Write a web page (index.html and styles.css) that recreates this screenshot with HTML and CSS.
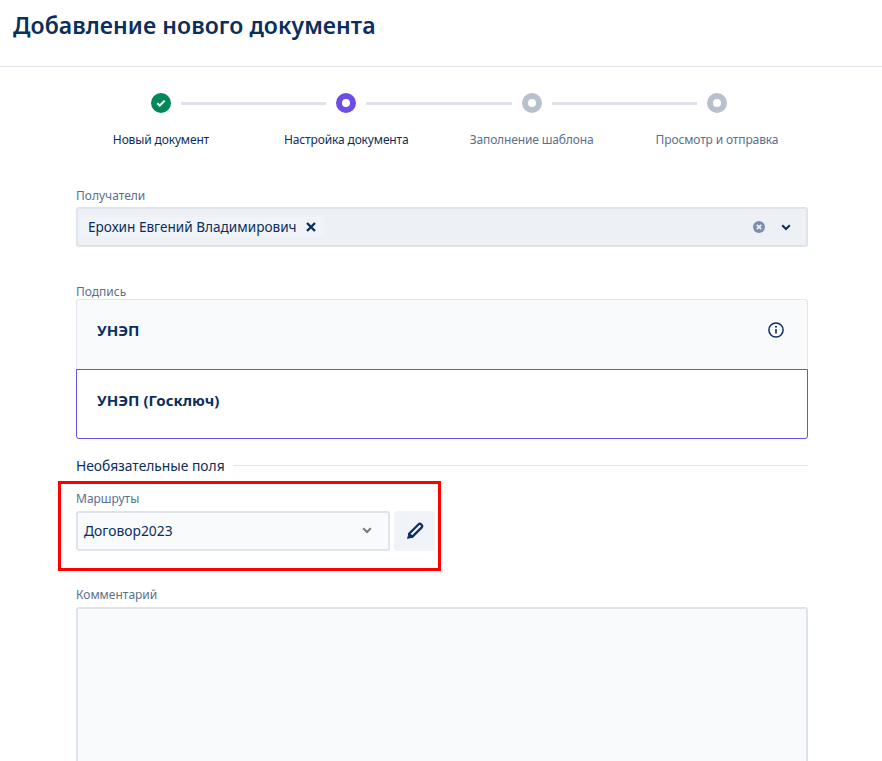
FILE: index.html
```html
<!DOCTYPE html>
<html lang="ru">
<head>
<meta charset="utf-8">
<title>Добавление нового документа</title>
<link rel="stylesheet" href="styles.css">
</head>
<body>
<header class="page-head"><h1 class="page-title">Добавление нового документа</h1></header>
<section class="stepper">
  <div class="track">
    <span class="dot dot-done"><svg width="10" height="8" viewBox="0 0 10 8"><path d="M1.3 4.2 3.8 6.5 8.7 1.6" fill="none" stroke="#fff" stroke-width="2"/></svg></span>
    <span class="bar"></span>
    <span class="dot dot-active"></span>
    <span class="bar"></span>
    <span class="dot dot-idle"></span>
    <span class="bar"></span>
    <span class="dot dot-idle"></span>
  </div>
  <div class="step-labels">
    <span class="step-label step-on">Новый документ</span>
    <span class="step-label step-on">Настройка документа</span>
    <span class="step-label">Заполнение шаблона</span>
    <span class="step-label">Просмотр и отправка</span>
  </div>
</section>
<main class="form">
  <div class="field-recipients">
    <div class="label">Получатели</div>
    <div class="multi">
      <span class="chip">Ерохин Евгений Владимирович
        <svg width="10" height="10" viewBox="0 0 10 10"><path d="M1 1 9 9M9 1 1 9" stroke="#0b2e5c" stroke-width="2.4"/></svg>
      </span>
      <span class="multi-tools">
        <svg width="12" height="12" viewBox="0 0 12 12"><circle cx="6" cy="6" r="6" fill="#7b8ead"/><path d="M3.8 3.8 8.2 8.2M8.2 3.8 3.8 8.2" stroke="#eceff3" stroke-width="1.8"/></svg>
        <svg width="10" height="7" viewBox="0 0 10 7"><path d="M1.2 1.3 5 5 8.8 1.3" fill="none" stroke="#0b2e5c" stroke-width="2"/></svg>
      </span>
    </div>
  </div>
  <div class="field-sign">
    <div class="label">Подпись</div>
    <div class="sign-option">
      <span class="sign-name">УНЭП</span>
      <svg width="16" height="16" viewBox="0 0 16 16"><circle cx="8" cy="8" r="7.1" fill="none" stroke="#0b2e5c" stroke-width="1.5"/><path d="M8 7v4.6" stroke="#0b2e5c" stroke-width="1.6"/><circle cx="8" cy="4.7" r="1" fill="#0b2e5c"/></svg>
    </div>
    <div class="sign-option sign-selected"><span class="sign-name">УНЭП (Госключ)</span></div>
  </div>
  <div class="divider"><span class="divider-text">Необязательные поля</span><span class="divider-line"></span></div>
  <div class="routes">
    <div class="label">Маршруты</div>
    <div class="route-row">
      <div class="select">
        <span class="select-value">Договор2023</span>
        <svg width="10" height="7" viewBox="0 0 10 7"><path d="M1.2 1.3 5 5 8.8 1.3" fill="none" stroke="#737a85" stroke-width="2"/></svg>
      </div>
      <button class="edit-btn" type="button"><svg width="18" height="18" viewBox="0 0 18 18"><path d="M12.4 2.5a2 2 0 0 1 2.8 0l.3.3a2 2 0 0 1 0 2.8L6.2 14.9 3.1 11.8Z" fill="none" stroke="#0b3262" stroke-width="2.3" stroke-linejoin="round"/><path d="M2.6 10.8 1 17 7.2 15.4Z" fill="#0b3262"/></svg></button>
    </div>
    <div class="highlight"></div>
  </div>
  <div class="comment-field">
    <div class="label">Комментарий</div>
    <div class="textarea"></div>
  </div>
</main>
</body>
</html>
```
FILE: styles.css
```css
* { box-sizing: border-box; }
html, body { margin: 0; height: 100%; overflow: hidden; }
body { background: #fff; color: #0b2e5c; font-family: "Noto Sans", "Open Sans", sans-serif; }
.page-head { height: 67px; border-bottom: 1px solid #e0e5ec; padding: 8px 0 0 13px; }
.page-title { margin: 0; font-size: 23px; letter-spacing: 0.07px; line-height: 34px; font-weight: 600; color: #0b2e5c; }
.stepper { padding-top: 26px; }
.track { display: flex; align-items: center; margin-left: 151px; width: 576px; height: 20px; }
.dot { width: 20px; height: 20px; border-radius: 50%; flex: none; display: flex; align-items: center; justify-content: center; }
.dot-done { background: #00875a; }
.dot-active { border: 6px solid #6c4de6; background: #fff; }
.dot-idle { border: 6px solid #b8c0ce; background: #fff; }
.bar { flex: 1; height: 3px; margin: 0 10px; background: #dfe3e9; }
.step-labels { display: grid; grid-template-columns: repeat(4, 185.33px); margin: 18px 0 0 68.3px; }
.step-label { text-align: center; font-size: 12px; letter-spacing: -0.14px; line-height: 17px; color: #5b6f8c; white-space: nowrap; }
.step-on { color: #0b2e5c; }
.form { width: 732px; margin: 0 0 0 76px; }
.label { height: 16px; font-size: 12px; line-height: 18px; color: #5b6f8c; }
.field-recipients { margin-top: 39px; }
.multi { margin-top: 4px; height: 40px; background: #edf0f4; border: 2px solid #dfe3ea; border-radius: 3px; display: flex; align-items: center; justify-content: space-between; padding: 0 15px 0 2px; }
.chip { display: flex; align-items: center; gap: 9px; height: 20px; padding: 0 8px; background: #f0f3f7; border-radius: 2px; font-size: 13.6px; line-height: 18px; color: #0b2e5c; white-space: nowrap; }
.multi-tools { display: flex; align-items: center; gap: 16px; }
.field-sign { margin-top: 36px; }
.sign-option { height: 70px; display: flex; align-items: center; justify-content: space-between; padding: 0 23px 9px 20px; background: #f8fafc; border: 1px solid #e3e6ec; border-bottom: none; border-radius: 3px 3px 0 0; }
.sign-selected { background: #fff; border: 1px solid #6c4de6; border-radius: 0 0 3px 3px; }
.sign-name { font-size: 15px; font-weight: 700; color: #0b2e5c; }
.divider { display: flex; align-items: center; gap: 8px; margin-top: 17px; height: 18px; }
.divider-text { font-size: 13.8px; color: #0b2e5c; white-space: nowrap; }
.divider-line { flex: 1; height: 1px; background: #e0e3e9; }
.routes { position: relative; margin-top: 16px; }
.route-row { display: flex; gap: 4px; margin-top: 5px; }
.select { width: 314px; height: 40px; background: #f8fafc; border: 2px solid #dfe3ea; border-radius: 3px; display: flex; align-items: center; justify-content: space-between; padding: 0 16px 1px 6px; }
.select-value { font-size: 13.85px; color: #0b2e5c; }
.edit-btn { width: 41px; height: 40px; padding: 0; background: #f0f3f7; border: none; border-radius: 3px; display: flex; align-items: center; justify-content: center; }
.highlight { position: absolute; left: -18px; top: -9px; width: 383px; height: 90px; border: 3px solid #f00; pointer-events: none; }
.comment-field { margin-top: 35px; }
.textarea { margin-top: 5px; height: 200px; background: #f8fafc; border: 2px solid #dfe3ea; border-radius: 3px; }
```
